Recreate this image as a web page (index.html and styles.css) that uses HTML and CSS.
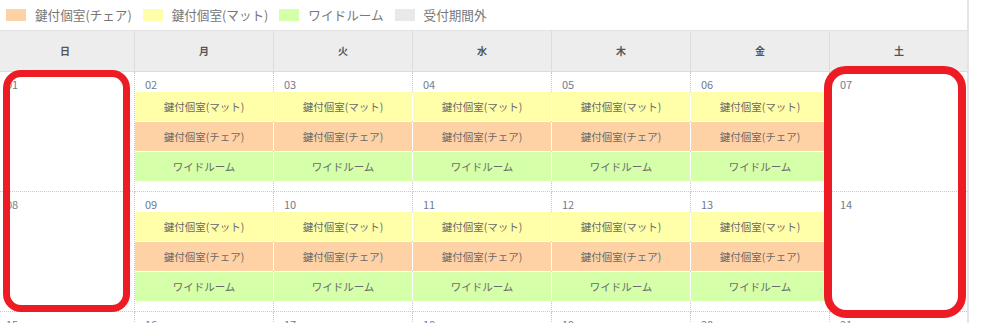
FILE: index.html
```html
<!DOCTYPE html>
<html lang="ja">
<head>
    <meta charset="UTF-8">
    <title>予約カレンダー</title>
    <link rel="stylesheet" href="styles.css">
</head>
<body>

    <div id="page">
        <div class="legend">
            <span class="item"><i class="swatch chair"></i>鍵付個室(チェア)</span>
            <span class="item"><i class="swatch mat"></i>鍵付個室(マット)</span>
            <span class="item"><i class="swatch wide"></i>ワイドルーム</span>
            <span class="item"><i class="swatch closed"></i>受付期間外</span>
        </div>

        <div class="calendar">
            <div class="week-head">
                <div>日</div><div>月</div><div>火</div><div>水</div><div>木</div><div>金</div><div>土</div>
            </div>

            <div class="week">
                <div class="day"><p class="num">01</p></div>
                <div class="day"><p class="num">02</p><p class="ev mat">鍵付個室(マット)</p><p class="ev chair">鍵付個室(チェア)</p><p class="ev wide">ワイドルーム</p></div>
                <div class="day"><p class="num">03</p><p class="ev mat">鍵付個室(マット)</p><p class="ev chair">鍵付個室(チェア)</p><p class="ev wide">ワイドルーム</p></div>
                <div class="day"><p class="num">04</p><p class="ev mat">鍵付個室(マット)</p><p class="ev chair">鍵付個室(チェア)</p><p class="ev wide">ワイドルーム</p></div>
                <div class="day"><p class="num">05</p><p class="ev mat">鍵付個室(マット)</p><p class="ev chair">鍵付個室(チェア)</p><p class="ev wide">ワイドルーム</p></div>
                <div class="day"><p class="num">06</p><p class="ev mat">鍵付個室(マット)</p><p class="ev chair">鍵付個室(チェア)</p><p class="ev wide">ワイドルーム</p></div>
                <div class="day"><p class="num">07</p></div>
            </div>

            <div class="week">
                <div class="day"><p class="num">08</p></div>
                <div class="day"><p class="num">09</p><p class="ev mat">鍵付個室(マット)</p><p class="ev chair">鍵付個室(チェア)</p><p class="ev wide">ワイドルーム</p></div>
                <div class="day"><p class="num">10</p><p class="ev mat">鍵付個室(マット)</p><p class="ev chair">鍵付個室(チェア)</p><p class="ev wide">ワイドルーム</p></div>
                <div class="day"><p class="num">11</p><p class="ev mat">鍵付個室(マット)</p><p class="ev chair">鍵付個室(チェア)</p><p class="ev wide">ワイドルーム</p></div>
                <div class="day"><p class="num">12</p><p class="ev mat">鍵付個室(マット)</p><p class="ev chair">鍵付個室(チェア)</p><p class="ev wide">ワイドルーム</p></div>
                <div class="day"><p class="num">13</p><p class="ev mat">鍵付個室(マット)</p><p class="ev chair">鍵付個室(チェア)</p><p class="ev wide">ワイドルーム</p></div>
                <div class="day"><p class="num">14</p></div>
            </div>

            <div class="week">
                <div class="day"><p class="num">15</p></div>
                <div class="day"><p class="num">16</p></div>
                <div class="day"><p class="num">17</p></div>
                <div class="day"><p class="num">18</p></div>
                <div class="day"><p class="num">19</p></div>
                <div class="day"><p class="num">20</p></div>
                <div class="day"><p class="num">21</p></div>
            </div>
        </div>

        <!-- 赤枠：週末の列 -->
        <div class="mark mark-sun"></div>
        <div class="mark mark-sat"></div>
    </div>

</body>
</html>
```

FILE: styles.css
```css
*{
    margin: 0;
    padding: 0;
}
html,body{
    height: 100%;
    overflow: hidden;
    background: #fff;
}
body{
    font-family: "Noto Sans CJK JP", "Liberation Sans", sans-serif;
    color: #666;
}
#page{
    position: relative;
    width: 967px;
    height: 323px;
    border-right: 2px solid #e4e4e4;
    overflow: hidden;
}

/* 凡例 */
.legend{
    height: 30px;
    display: flex;
    align-items: center;
    padding-left: 6px;
    font-size: 12.6px;
    line-height: 14px;
    color: #777;
}
.legend .item{
    display: flex;
    align-items: center;
    margin-right: 11px;
}
.swatch{
    display: inline-block;
    width: 20px;
    height: 12px;
    margin-right: 9px;
}
.chair{ background: #ffd2a6; }
.mat{ background: #ffffaa; }
.wide{ background: #d5ffa8; }
.closed{ background: #e9e9e9; }

/* カレンダー */
.calendar{
    margin-left: -4px;
    width: 973px;
}
.week-head,.week{
    display: grid;
    grid-template-columns: repeat(7, 139px);
}
.week-head{
    background: #ededed;
    border-top: 1px solid #e2e2e2;
    border-bottom: 1px solid #dcdcdc;
}
.week-head div{
    height: 40px;
    line-height: 40px;
    text-align: center;
    font-size: 10px;
    font-weight: bold;
    color: #555;
    border-right: 1px solid #dcdcdc;
}
.day{
    height: 114px;
    padding-top: 5px;
    border-right: 1px dotted #c8c8c8;
    border-bottom: 1px dotted #c8c8c8;
}
.num{
    height: 15px;
    line-height: 15px;
    padding-left: 10px;
    font-size: 11px;
    color: #737c8e;
}
.ev{
    height: 29px;
    line-height: 29px;
    margin-bottom: 1px;
    margin-right: -1px;
    border-right: 1px solid #fff;
    text-align: center;
    font-size: 10.5px;
    color: #6a6a6a;
}

/* 赤枠 */
.mark{
    position: absolute;
    box-sizing: border-box;
    border-style: solid;
    border-color: #ed1c24;
}
.mark-sun{
    left: 3px;
    top: 70px;
    width: 127px;
    height: 242px;
    border-width: 7px;
    border-radius: 18px;
}
.mark-sat{
    left: 824px;
    top: 66px;
    width: 142px;
    height: 252px;
    border-width: 8px;
    border-radius: 22px;
}
```
